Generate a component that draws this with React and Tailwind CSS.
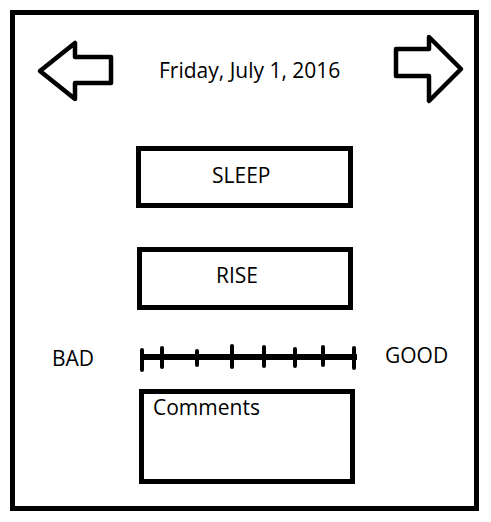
import React from 'react';

function LeftArrow() {
  return (
    <svg width="80" height="66" viewBox="0 0 80 66" className="mt-[23px] ml-[20px] shrink-0">
      <polygon
        points="5,33 40,5 40,19 76,19 76,45 40,45 40,61"
        fill="none"
        stroke="black"
        strokeWidth="4.5"
        strokeLinejoin="round"
      />
    </svg>
  );
}

function RightArrow() {
  return (
    <svg width="74" height="74" viewBox="0 0 74 74" className="mt-[17px] ml-auto mr-[8px] shrink-0">
      <polygon
        points="4,17 37,17 37,5 69,37 37,69 37,44 4,44"
        fill="none"
        stroke="black"
        strokeWidth="4.5"
        strokeLinejoin="round"
      />
    </svg>
  );
}

const ticks = [
  [2, 8, 28],
  [22, 6, 25],
  [57, 9, 23],
  [92, 4, 25],
  [124, 5, 24],
  [155, 7, 24],
  [183, 5, 23],
  [214, 6, 26],
];

function Scale() {
  return (
    <svg width="220" height="30" viewBox="0 0 220 30" className="shrink-0">
      <rect x="1" y="12" width="216" height="6" fill="black" />
      {ticks.map(([x, y1, y2]) => (
        <line key={x} x1={x} y1={y1} x2={x} y2={y2} stroke="black" strokeWidth="4" strokeLinecap="round" />
      ))}
    </svg>
  );
}

export default function App() {
  return (
    <div className="w-[491px] h-[522px] bg-white pt-[10px] pl-[10px] font-['Open_Sans',sans-serif] text-black text-[21px] leading-[24px]">
      <div className="w-[469px] h-[501px] border-[5px] border-black flex flex-col">
        <div className="flex items-start h-[131px]">
          <LeftArrow />
          <div className="mt-[43px] ml-[44px] whitespace-nowrap">Friday, July 1, 2016</div>
          <RightArrow />
        </div>

        <div className="ml-[121px] w-[217px] h-[62px] border-[5px] border-black flex items-center pl-[71px] pb-[5px]">
          SLEEP
        </div>

        <div className="mt-[39px] ml-[122px] w-[216px] h-[63px] border-[5px] border-black flex items-center pl-[74px] pb-[8px]">
          RISE
        </div>

        <div className="mt-[32px] flex items-center h-[30px]">
          <div className="ml-[37px] w-[88px] mt-[1px]">BAD</div>
          <Scale />
          <div className="ml-[25px] -mt-[4px]">GOOD</div>
        </div>

        <div className="mt-[17px] ml-[124px] w-[216px] h-[95px] border-[5px] border-black pl-[9px] pt-[1px]">
          Comments
        </div>
      </div>
    </div>
  );
}
